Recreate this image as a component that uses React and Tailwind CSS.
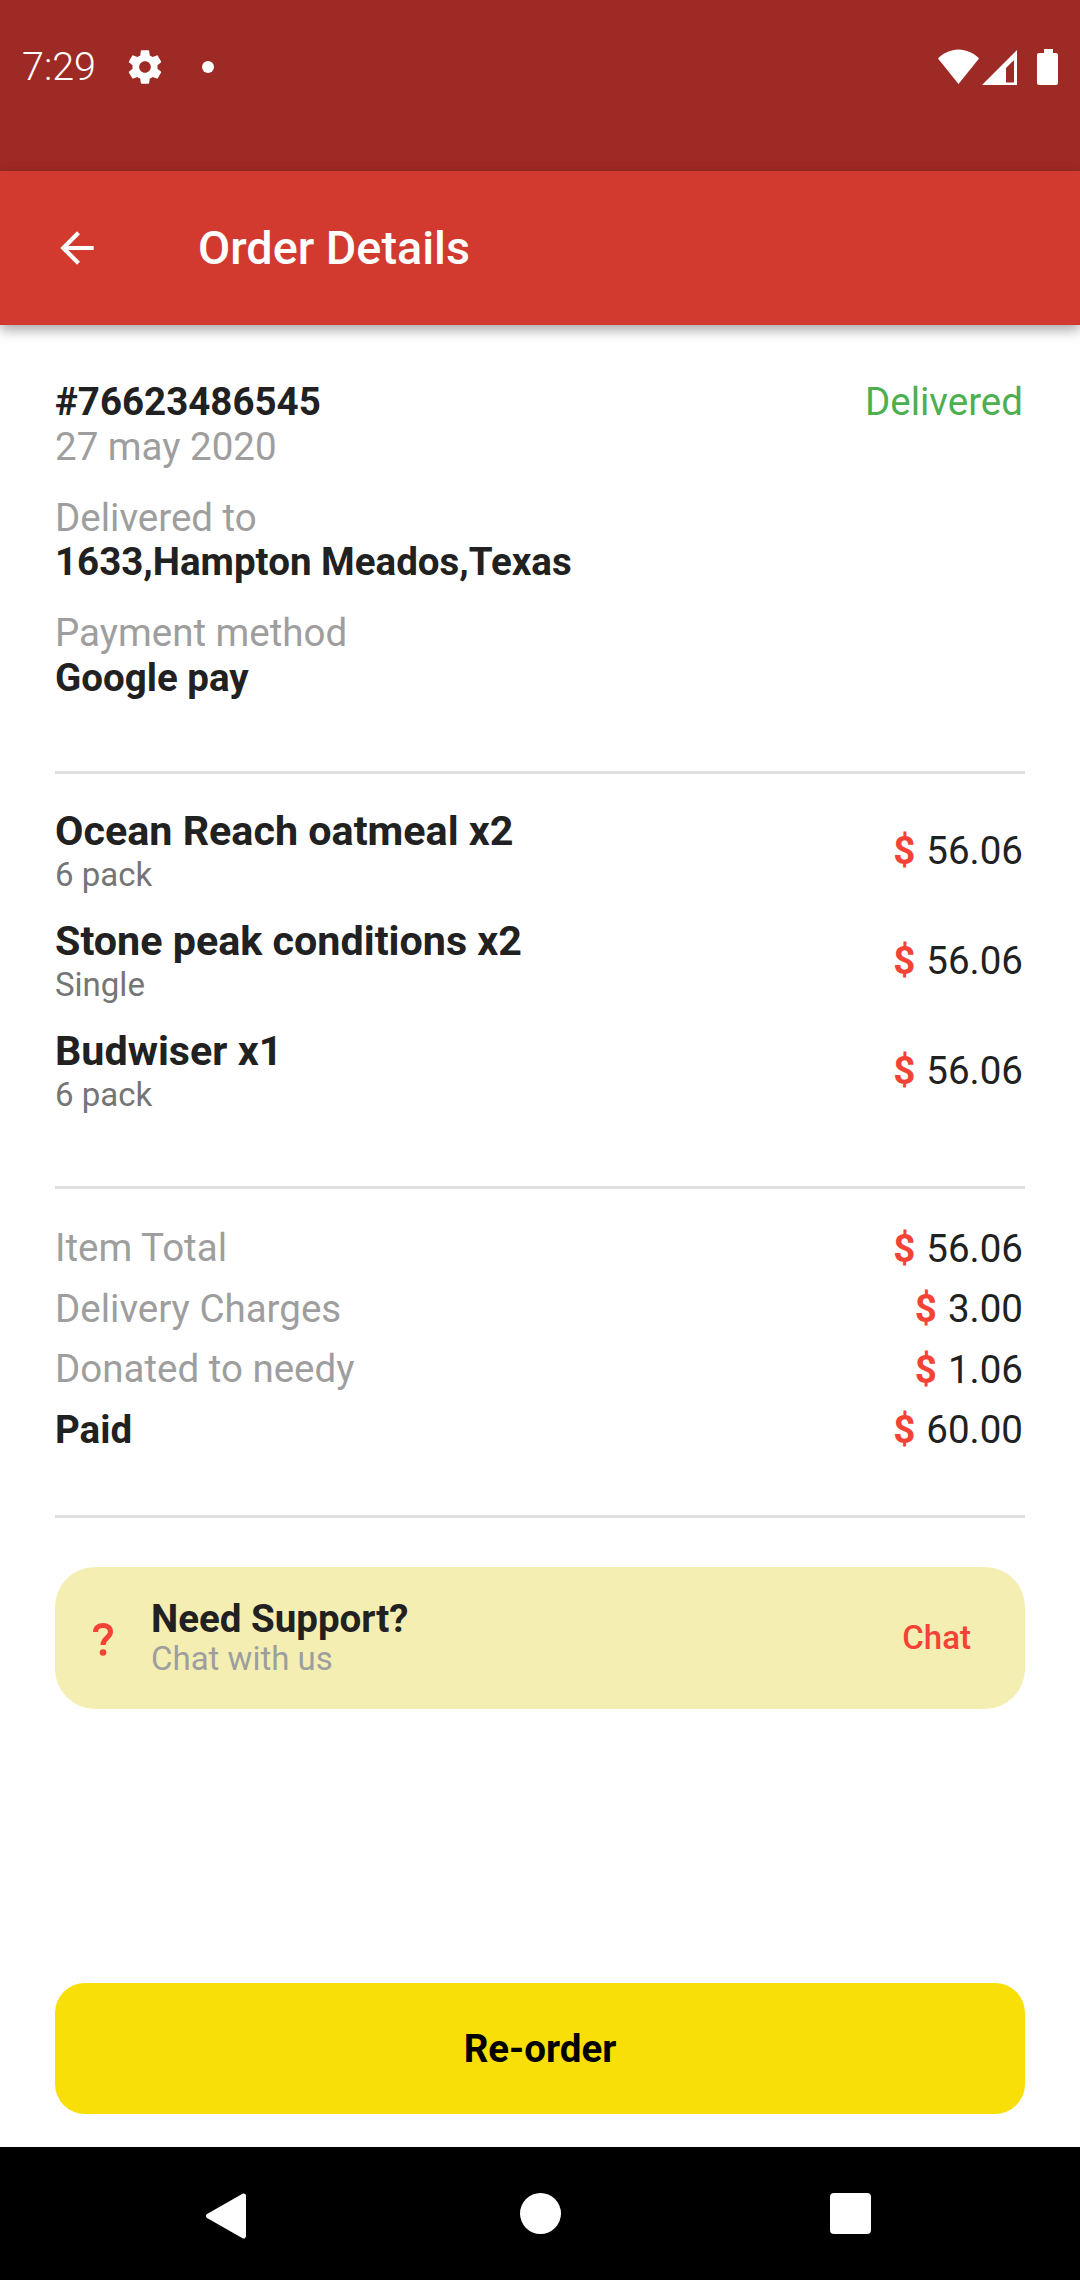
const font = { fontFamily: 'Roboto, sans-serif' };

function Dollar() {
  return <span className="font-bold text-[#f44336] mr-[11px]">$</span>;
}

function Price({ value }) {
  return (
    <div className="text-[38.5px] leading-[45px] text-[#212121] mr-[2px]">
      <Dollar />
      {value}
    </div>
  );
}

function Item({ title, sub }) {
  return (
    <div className="flex justify-between items-center h-[110px]">
      <div>
        <div className="text-[41.25px] leading-[48px] font-bold text-[#212121]">{title}</div>
        <div className="text-[33px] leading-[39px] text-[#757575]">{sub}</div>
      </div>
      <Price value="56.06" />
    </div>
  );
}

function Total({ label, value, bold }) {
  return (
    <div className="flex justify-between items-center h-[60.5px]">
      <div className={bold ? 'text-[38.5px] font-bold text-[#212121]' : 'text-[38.5px] text-[#9e9e9e]'}>{label}</div>
      <Price value={value} />
    </div>
  );
}

export default function App() {
  return (
    <div className="w-[1080px] h-[2280px] flex flex-col bg-white overflow-hidden" style={font}>
      <div className="h-[171px] bg-[#9e2a25] flex justify-between items-start pt-[43px] px-[22px] text-white">
        <div className="flex items-center">
          <span className="text-[39.5px] leading-[48px] font-light">7:29</span>
          <svg className="ml-[29px]" width="40" height="40" viewBox="0 0 24 24" fill="#fff">
            <path d="M19.43 12.98c.04-.32.07-.64.07-.98s-.03-.66-.07-.98l2.11-1.65c.19-.15.24-.42.12-.64l-2-3.46c-.12-.22-.39-.3-.61-.22l-2.49 1c-.52-.4-1.08-.73-1.69-.98l-.38-2.65C14.46 2.18 14.25 2 14 2h-4c-.25 0-.46.18-.49.42l-.38 2.65c-.61.25-1.17.59-1.69.98l-2.49-1c-.23-.09-.49 0-.61.22l-2 3.46c-.13.22-.07.49.12.64l2.11 1.65c-.04.32-.07.65-.07.98s.03.66.07.98l-2.11 1.65c-.19.15-.24.42-.12.64l2 3.46c.12.22.39.3.61.22l2.49-1c.52.4 1.08.73 1.69.98l.38 2.65c.03.24.24.42.49.42h4c.25 0 .46-.18.49-.42l.38-2.65c.61-.25 1.17-.59 1.69-.98l2.49 1c.23.09.49 0 .61-.22l2-3.46c.12-.22.07-.49-.12-.64l-2.11-1.65zM12 15.500c-1.930 0-3.500-1.570-3.500-3.500s1.570-3.500 3.500-3.500 3.500 1.570 3.500 3.500-1.570 3.500-3.500 3.500z" />
          </svg>
          <span className="ml-[37px] w-[12px] h-[12px] rounded-full bg-white" />
        </div>
        <svg className="mt-[6px]" width="120" height="36" viewBox="0 0 120 36" fill="#fff">
          <path d="M0 9.500C5 4 13 0.500 20.500 0.500S36 4 41 9.500L20.500 35Z" />
          <path fillRule="evenodd" d="M44 36 79 1V36ZM68 33.500h8V11l-8 8Z" />
          <path d="M101 36a2 2 0 0 1-2-2V6a2 2 0 0 1 2-2h5V0h9v4h3a2 2 0 0 1 2 2v28a2 2 0 0 1-2 2Z" />
        </svg>
      </div>

      <div className="relative z-10 h-[154px] bg-[#d33a2f] flex items-center shadow-[0_5px_12px_rgba(0,0,0,0.35)] text-white">
        <svg className="ml-[52px]" width="50" height="50" viewBox="0 0 24 24" fill="#fff">
          <path d="M20 11H7.830l5.590-5.590L12 4l-8 8 8 8 1.410-1.410L7.830 13H20v-2z" />
        </svg>
        <div className="ml-[96px] font-medium leading-[50px] text-[46.75px]">Order Details</div>
      </div>

      <div className="flex-1 flex flex-col px-[55px]">
        <div className="flex justify-between pt-[55px] h-[449px] border-b-[3px] border-[#e0e0e0] text-[38.5px] leading-[44.500px]">
          <div>
            <div className="font-bold text-[#212121]">#76623486545</div>
            <div className="text-[#9e9e9e]">27 may 2020</div>
            <div className="text-[#9e9e9e] mt-[26.500px]">Delivered to</div>
            <div className="font-bold text-[#212121]">1633,Hampton Meados,Texas</div>
            <div className="text-[#9e9e9e] mt-[26.500px]">Payment method</div>
            <div className="font-bold text-[#212121]">Google pay</div>
          </div>
          <div className="text-[#4caf50] mr-[2px]">Delivered</div>
        </div>

        <div className="pt-[21px] h-[415px] border-b-[3px] border-[#e0e0e0]">
          <Item title="Ocean Reach oatmeal x2" sub="6 pack" />
          <Item title="Stone peak conditions x2" sub="Single" />
          <Item title="Budwiser x1" sub="6 pack" />
        </div>

        <div className="pt-[29px] h-[329px] border-b-[3px] border-[#e0e0e0]">
          <Total label="Item Total" value="56.06" />
          <Total label="Delivery Charges" value="3.00" />
          <Total label="Donated to needy" value="1.06" />
          <Total label="Paid" value="60.00" bold />
        </div>

        <div className="mt-[49px] h-[142px] rounded-[40px] bg-[#f5eeb2] flex items-center">
          <svg className="ml-[38px] mt-[3px]" width="20" height="33" viewBox="0 0 20 33" fill="none" stroke="#f44336">
            <path strokeWidth="5" d="M2.500 9C2.500 5 5.500 2.500 10 2.500s7.500 2.500 7.500 6.500c0 5.500-7.500 6-7.500 13" />
            <circle cx="10" cy="29.500" r="3.300" fill="#f44336" stroke="none" />
          </svg>
          <div className="ml-[38px] flex-1">
            <div className="text-[38.5px] leading-[42px] font-bold text-[#212121]">Need Support?</div>
            <div className="text-[33px] leading-[38px] text-[#9e9e9e]">Chat with us</div>
          </div>
          <div className="mr-[54px] text-[33px] font-medium text-[#f44336]">Chat</div>
        </div>

        <div className="mt-auto mb-[33px] h-[131px] rounded-[30px] bg-[#f7df07] flex items-center justify-center text-[38.5px] font-bold text-black">Re-order</div>
      </div>

      <div className="h-[133px] bg-black flex items-start pt-[46px] text-white">
        <svg className="ml-[206px]" width="40" height="46" viewBox="0 0 40 46" fill="#fff">
          <path d="M37 0.500a2.500 2.500 0 0 1 3 2.500v40a2.500 2.500 0 0 1-3 2.500L1 25a2.800 2.800 0 0 1 0-4Z" />
        </svg>
        <span className="ml-[274px] w-[41px] h-[41px] rounded-full bg-white" />
        <span className="ml-[269px] w-[41px] h-[41px] rounded-[4px] bg-white" />
      </div>
    </div>
  );
}
